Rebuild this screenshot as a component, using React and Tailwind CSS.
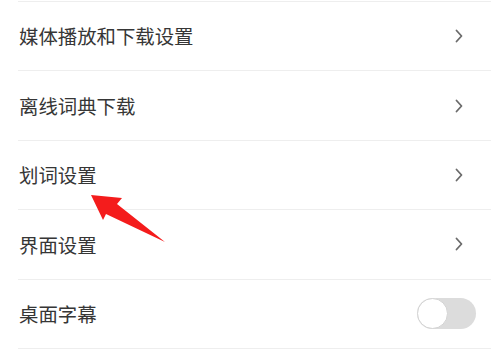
const rows = [
  { label: '媒体播放和下载设置', kind: 'link' },
  { label: '离线词典下载', kind: 'link' },
  { label: '划词设置', kind: 'link' },
  { label: '界面设置', kind: 'link' },
  { label: '桌面字幕', kind: 'toggle' },
]

function Chevron() {
  return (
    <svg width="8" height="14" viewBox="0 0 8 14" className="mr-[13px]">
      <path d="M1.5 1.5 L6.5 7 L1.5 12.5" fill="none" stroke="#6b6b6b" strokeWidth="1.8" strokeLinecap="round" strokeLinejoin="round" />
    </svg>
  )
}

function Toggle() {
  return (
    <div className="relative w-[59px] h-[31px] rounded-full bg-[#dcdcdc]">
      <div className="absolute left-0 top-0 w-[31px] h-[31px] rounded-full bg-white border border-[#d4d4d4]" />
    </div>
  )
}

export default function App() {
  return (
    <div className="relative w-[499px] h-[357px] bg-white overflow-hidden" style={{ fontFamily: '"Noto Sans CJK SC", "Noto Sans", sans-serif' }}>
      <div className="mt-px ml-[18px] mr-[8px] border-b border-[#eeeeee]">
        {rows.map((r) => (
          <div key={r.label} className="h-[69.4px] border-t border-[#eeeeee] flex items-center justify-between pl-[1px] pr-[15px]">
            <span className="text-[19.4px] leading-none text-[#363636]">{r.label}</span>
            {r.kind === 'link' ? <Chevron /> : <Toggle />}
          </div>
        ))}
      </div>

      {/* annotation arrow */}
      <svg className="absolute left-0 top-0 pointer-events-none" width="499" height="357" viewBox="0 0 499 357">
        <polygon points="91,195 122,198 117,204 165,242 106,214 103,220" fill="#f41c1c" />
      </svg>
    </div>
  )
}
